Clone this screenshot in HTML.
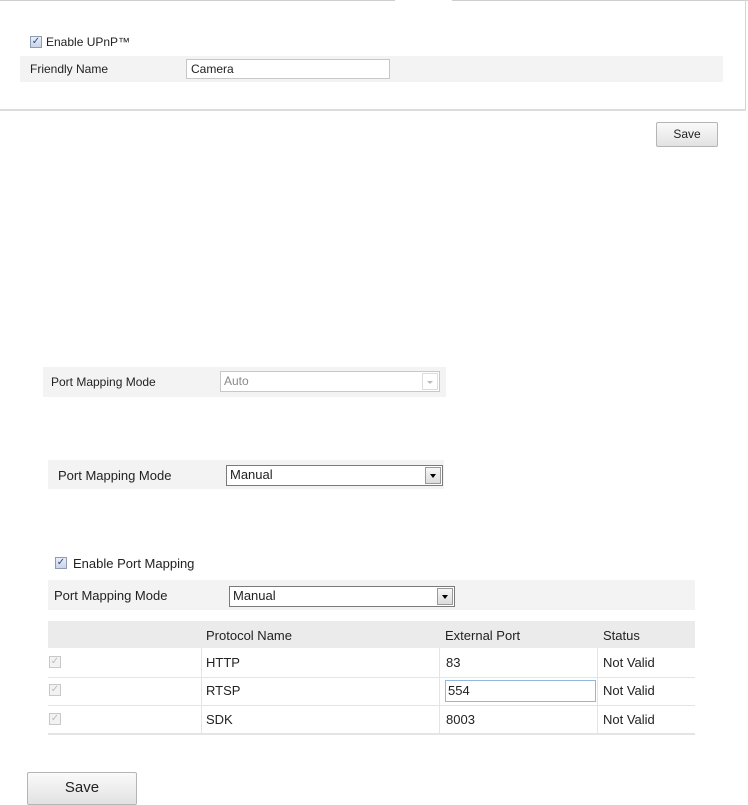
<!DOCTYPE html>
<html><head><style>
*{box-sizing:border-box;margin:0;padding:0}
body{width:748px;height:804px;background:#fff;position:relative;font-family:"Liberation Sans",Arial,sans-serif;color:#222;overflow:hidden}
.a{position:absolute}
.row{position:absolute;background:#f3f3f3}
.t{position:absolute;font-size:12px;white-space:nowrap}
.inp{position:absolute;background:#fff;border:1px solid #c8c8c8;font-size:12px;padding:2px 4px}
.cb{position:absolute;width:12px;height:12px;border:1px solid #8e9bb0;background:linear-gradient(#e8eef8,#c9d4e6);font-size:10px;line-height:10px;text-align:center;color:#2b4a8a}
.cbd{border-color:#c8c8c8;background:#f2f2f2;color:#bbb}
.btn{position:absolute;border:1px solid #b5b5b5;border-radius:2px;background:linear-gradient(#fafafa,#e2e2e2);text-align:center;color:#222}
.sel{position:absolute;background:#fff;border:1px solid #7a7a7a;font-size:12px;padding:2px 3px}
.arr{position:absolute;right:1px;top:1px;bottom:1px;width:16px;border:1px solid #999;background:linear-gradient(#f6f6f6,#dcdcdc)}
.arr:after{content:"";position:absolute;left:4px;top:6px;border-left:3px solid transparent;border-right:3px solid transparent;border-top:4px solid #000}
.td{position:absolute;font-size:12px;white-space:nowrap}
</style></head><body>
<div class="a" style="left:0;top:0;width:395px;height:1px;background:#cfcfcf"></div>
<div class="a" style="left:452px;top:0;width:296px;height:1px;background:#cfcfcf"></div>
<div class="a" style="left:745px;top:0;width:1px;height:110px;background:#d5d5d5"></div>
<div class="a" style="left:0;top:109px;width:746px;height:2px;background:#dcdcdc"></div>
<div class="cb" style="left:30px;top:36px">✓</div>
<div class="t" style="left:46px;top:35px">Enable UPnP™</div>
<div class="row" style="left:20px;top:56px;width:703px;height:26px"></div>
<div class="t" style="left:30px;top:62px">Friendly Name</div>
<div class="inp" style="left:186px;top:59px;width:204px;height:20px">Camera</div>
<div class="btn" style="left:656px;top:122px;width:62px;height:25px;font-size:12px;line-height:23px">Save</div>

<div class="row" style="left:43px;top:367px;width:403px;height:30px"></div>
<div class="t" style="left:51px;top:375px">Port Mapping Mode</div>
<div class="a" style="left:220px;top:371px;width:220px;height:21px;border:1px solid #c8c8c8;background:#fff;font-size:12px;color:#888;padding:2px 3px">Auto<div class="a" style="right:1px;top:1px;bottom:1px;width:16px;border:1px solid #ddd"><div class="a" style="left:4px;top:7px;border-left:3px solid transparent;border-right:3px solid transparent;border-top:3px solid #bbb"></div></div></div>

<div class="row" style="left:48px;top:460px;width:396px;height:29px"></div>
<div class="t" style="left:58px;top:468px;font-size:13px">Port Mapping Mode</div>
<div class="sel" style="left:226px;top:465px;width:217px;height:21px;font-size:13px;padding:1px 3px">Manual<div class="arr"></div></div>

<div class="cb" style="left:55px;top:557px">✓</div>
<div class="t" style="left:73px;top:556px;font-size:13px">Enable Port Mapping</div>
<div class="row" style="left:48px;top:580px;width:647px;height:30px"></div>
<div class="t" style="left:54px;top:588px;font-size:13px">Port Mapping Mode</div>
<div class="sel" style="left:229px;top:586px;width:226px;height:21px;font-size:13px;padding:1px 3px">Manual<div class="arr"></div></div>

<div class="a" style="left:48px;top:621px;width:647px;height:27px;background:#ebebeb"></div>
<div class="td" style="left:206px;top:628px;font-size:13px">Protocol Name</div>
<div class="td" style="left:445px;top:628px;font-size:13px">External Port</div>
<div class="td" style="left:603px;top:628px;font-size:13px">Status</div>
<div class="a" style="left:201px;top:648px;width:1px;height:86px;background:#e4e4e4"></div>
<div class="a" style="left:439px;top:648px;width:1px;height:86px;background:#e4e4e4"></div>
<div class="a" style="left:597px;top:648px;width:1px;height:86px;background:#e4e4e4"></div>
<div class="a" style="left:48px;top:677px;width:647px;height:1px;background:#e4e4e4"></div>
<div class="a" style="left:48px;top:705px;width:647px;height:1px;background:#e4e4e4"></div>
<div class="a" style="left:48px;top:733px;width:647px;height:2px;background:#e4e4e4"></div>

<div class="cb cbd" style="left:49px;top:656px">✓</div>
<div class="td" style="left:206px;top:655px;font-size:13px">HTTP</div>
<div class="td" style="left:446px;top:655px;font-size:13px">83</div>
<div class="td" style="left:603px;top:655px;font-size:13px">Not Valid</div>
<div class="cb cbd" style="left:49px;top:684px">✓</div>
<div class="td" style="left:206px;top:683px;font-size:13px">RTSP</div>
<div class="a" style="left:445px;top:680px;width:151px;height:22px;border:1px solid #8fb8e0;background:#fff;font-size:13px;padding:2px 2px">554</div>
<div class="td" style="left:603px;top:683px;font-size:13px">Not Valid</div>
<div class="cb cbd" style="left:49px;top:713px">✓</div>
<div class="td" style="left:206px;top:712px;font-size:13px">SDK</div>
<div class="td" style="left:446px;top:712px;font-size:13px">8003</div>
<div class="td" style="left:603px;top:712px;font-size:13px">Not Valid</div>

<div class="btn" style="left:27px;top:772px;width:110px;height:33px;font-size:15px;line-height:30px">Save</div>
</body></html>
